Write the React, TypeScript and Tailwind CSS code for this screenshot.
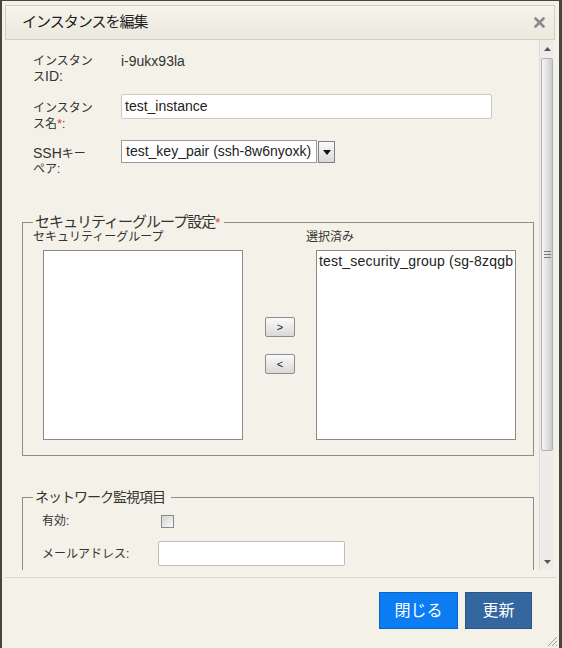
import React from "react";

const font = "font-['Liberation_Sans','Noto_Sans_CJK_JP',sans-serif]";

function Req() {
  return <span className="text-[13px] text-[#e03a3a]">*</span>;
}

function Label({ children, className = "" }: { children: React.ReactNode; className?: string }) {
  return (
    <div className={`w-[88px] shrink-0 text-[12px] leading-[15px] text-[#333] ${className}`}>
      {children}
    </div>
  );
}

function ScrollBar() {
  return (
    <div className="w-[15px] flex flex-col bg-[#edece8] border-l border-[#dedcd4]">
      <div className="h-[18px] flex items-center justify-center">
        <svg width="7" height="4" viewBox="0 0 7 4">
          <path d="M0 4 L3.5 0 L7 4 Z" fill="#555" />
        </svg>
      </div>
      <div className="h-[393px] mx-[1px] rounded-[2px] border border-[#b2b2b2] bg-gradient-to-r from-[#f4f4f4] via-[#e2e2e2] to-[#c9c9c9] flex items-center justify-center">
        <div className="flex flex-col gap-[2px]">
          <div className="w-[7px] h-[1px] bg-[#777]" />
          <div className="w-[7px] h-[1px] bg-[#777]" />
          <div className="w-[7px] h-[1px] bg-[#777]" />
        </div>
      </div>
      <div className="flex-1" />
      <div className="h-[16px] flex items-center justify-center">
        <svg width="7" height="4" viewBox="0 0 7 4">
          <path d="M0 0 L3.5 4 L7 0 Z" fill="#555" />
        </svg>
      </div>
    </div>
  );
}

function MoveButton({ label }: { label: string }) {
  return (
    <button className="w-[30px] h-[20px] rounded-[2px] border border-[#8c8c8c] bg-gradient-to-b from-[#fafafa] to-[#d9d9d9] text-[11px] leading-none text-[#222]">
      {label}
    </button>
  );
}

export default function App() {
  return (
    <div
      className={`relative w-[562px] h-[648px] bg-[#f4f2e8] border-l-2 border-t border-r-[3px] border-[#46463f] ${font} text-[#333]`}
    >
      {/* title bar */}
      <div className="mt-[4px] ml-[3px] mr-[4px] h-[35px] flex items-center justify-between border border-[#d2cebd] bg-gradient-to-b from-[#f6f4ec] to-[#ebe8dc] pl-[16px] pr-[9px]">
        <span className="text-[15px] tracking-[-1px] text-[#222]">インスタンスを編集</span>
        <svg width="11" height="11" viewBox="0 0 11 11">
          <path d="M1.5 1.5 L9.5 9.5 M9.5 1.5 L1.5 9.5" stroke="#8a8a8a" strokeWidth="2.6" strokeLinecap="round" />
        </svg>
      </div>

      {/* scrollable body */}
      <div className="h-[530px] flex pr-[5px]">
        <div className="flex-1 overflow-hidden">
          <div className="pt-[14px]">
            <div className="flex h-[30px] pl-[31px]">
              <Label>
                インスタン
                <br />
                ス<span className="text-[14px] leading-[15px]">ID:</span>
              </Label>
              <div className="text-[14px] leading-[15px] text-[#333]">i-9ukx93la</div>
            </div>

            <div className="mt-[10px] flex h-[36px] items-start pl-[31px]">
              <Label className="pt-[7px]">
                インスタン
                <br />
                ス名<Req />:
              </Label>
              <div className="w-[371px] h-[25px] rounded-[2px] border border-[#c9c9c9] bg-white px-[3px] text-[14px] leading-[23px] text-[#222]">
                test_instance
              </div>
            </div>

            <div className="mt-[10px] flex h-[36px] items-start pl-[31px]">
              <Label className="pt-[6px]">
                <span className="text-[14px] leading-[15px]">SSH</span>キー
                <br />
                ペア:
              </Label>
              <div className="flex h-[23px]">
                <div className="w-[196px] h-[23px] border border-[#9a9a9a] bg-white pl-[4px] text-[14px] leading-[21px] text-[#222] whitespace-nowrap overflow-hidden">
                  test_key_pair (ssh-8w6nyoxk)
                </div>
                <div className="ml-[1px] w-[17px] h-[22px] mt-[1px] border border-[#808080] bg-gradient-to-b from-[#fbfbfb] to-[#d8d8d8] flex items-center justify-center">
                  <svg width="8" height="5" viewBox="0 0 8 5">
                    <path d="M0 0 L4 5 L8 0 Z" fill="#111" />
                  </svg>
                </div>
              </div>
            </div>

            <fieldset className="mt-[38px] ml-[20px] w-[512px] border border-[#8e8e8a] pb-[15px]">
              <legend className="ml-[10px] pl-[2px] pr-[5px] h-[16px] text-[15px] tracking-[-1px] leading-[16px] text-[#333]">
                セキュリティーグループ設定<Req />
              </legend>
              <div className="flex pl-[10px]">
                <div className="w-[210px]">
                  <div className="text-[12px] leading-[14px]">セキュリティーグループ</div>
                  <div className="mt-[6px] ml-[10px] w-[200px] h-[190px] border border-[#8a8a8a] bg-white" />
                </div>
                <div className="ml-[22px] pt-[87px] flex flex-col gap-[17px]">
                  <MoveButton label=">" />
                  <MoveButton label="<" />
                </div>
                <div className="ml-[11px] w-[210px]">
                  <div className="text-[12px] leading-[14px]">選択済み</div>
                  <div className="mt-[6px] ml-[10px] w-[200px] h-[190px] border border-[#8a8a8a] bg-white pl-[2px] pt-[1px] text-[14px] tracking-[0.2px] leading-[18px] text-[#222] whitespace-nowrap overflow-hidden">
                    test_security_group (sg-8zqgb
                  </div>
                </div>
              </div>
            </fieldset>

            <fieldset className="mt-[33px] ml-[20px] w-[512px] border border-[#8e8e8a] pb-[20px]">
              <legend className="ml-[10px] pl-[2px] pr-[6px] h-[16px] text-[14px] tracking-[-1px] leading-[16px] text-[#333]">
                ネットワーク監視項目
              </legend>
              <div className="mt-[9px] flex items-center h-[14px] pl-[19px]">
                <div className="w-[119px] text-[12px]">有効:</div>
                <div className="w-[13px] h-[13px] border border-[#8a8a8a] bg-gradient-to-br from-[#d4d4d4] to-[#f8f8f8]" />
              </div>
              <div className="mt-[13px] flex items-center pl-[19px]">
                <div className="w-[116px] text-[12px]">メールアドレス:</div>
                <div className="w-[187px] h-[25px] rounded-[2px] border border-[#bdbdbd] bg-white" />
              </div>
            </fieldset>
          </div>
        </div>
        <ScrollBar />
      </div>

      {/* footer */}
      <div className="mt-[7px] mx-[3px] border-t border-[#dcd8c7]" />
      <div className="pt-[14px] pr-[27px] flex justify-end gap-[7px]">
        <button className="w-[79px] h-[37px] border border-[#0a64c4] bg-[#0b7cf2] text-white text-[16px]">
          閉じる
        </button>
        <button className="w-[67px] h-[37px] border border-[#2a5585] bg-[#34669f] text-white text-[16px]">
          更新
        </button>
      </div>

      <svg className="absolute right-[1px] bottom-[1px]" width="12" height="12" viewBox="0 0 12 12">
        <path d="M11 2 L2 11 M11 6 L6 11 M11 10 L10 11" stroke="#9a9a92" strokeWidth="1" />
      </svg>
    </div>
  );
}
